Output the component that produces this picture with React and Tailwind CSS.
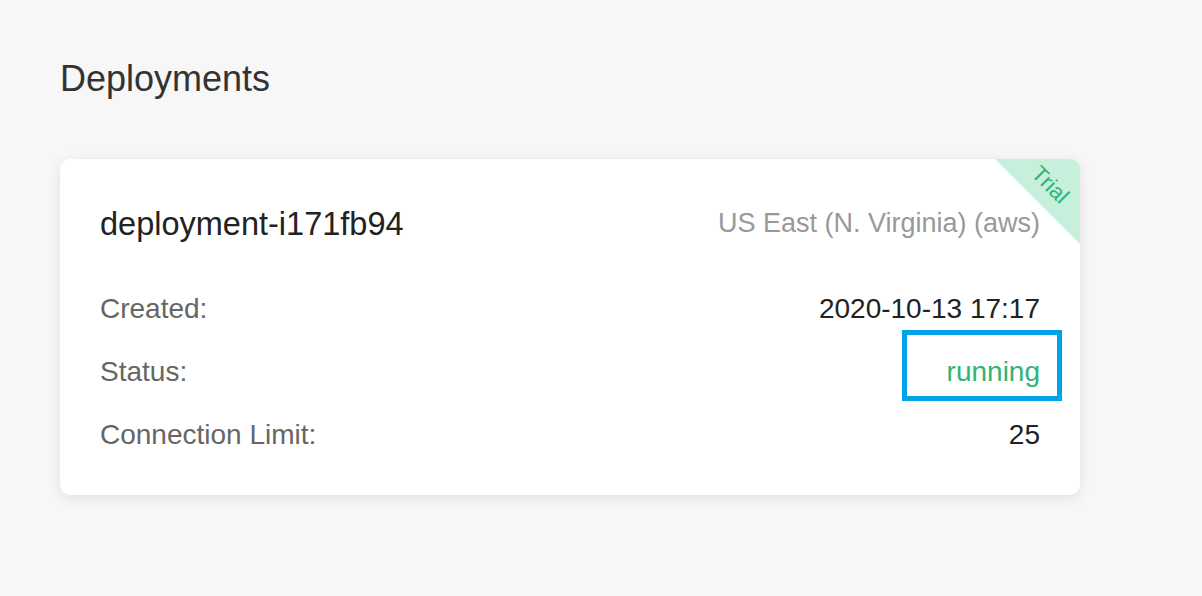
export default function App() {
  const rows = [
    { label: "Created:", value: "2020-10-13 17:17", cls: "text-[#222222]" },
    { label: "Status:", value: "running", cls: "text-[#2fb574]" },
    { label: "Connection Limit:", value: "25", cls: "text-[#222222]" },
  ];
  return (
    <div
      className="min-h-screen w-full bg-[#f7f7f7] px-[60px] pt-[57px]"
      style={{ fontFamily: '"Liberation Sans", Arial, sans-serif' }}
    >
      <h1 className="text-[36px] leading-[44px] text-[#333333] font-normal">Deployments</h1>
      <div className="relative mt-[58px] w-[1020px] rounded-[10px] bg-white shadow-[0_3px_14px_rgba(0,0,0,0.09)] overflow-hidden px-[40px] pt-[45px] pb-[29px]">
        <div className="absolute right-0 top-0 h-0 w-0 border-l-[85px] border-l-transparent border-t-[85px] border-t-[#c6efdc]"></div>
        <div className="absolute right-[-2px] top-[14px] w-[64px] text-center rotate-45 text-[22px] leading-[24px] text-[#2fb574]">
          Trial
        </div>
        <div className="flex justify-between items-start">
          <div className="text-[32.5px] leading-[40px] text-[#222222]">deployment-i171fb94</div>
          <div className="mt-[5px] text-[27px] leading-[28px] text-[#999999]">US East (N. Virginia) (aws)</div>
        </div>
        <div className="mt-[33px] flex flex-col">
          {rows.map((r) => (
            <div key={r.label} className="flex justify-between items-center h-[63px] text-[28px] leading-[63px]">
              <span className="text-[#666666]">{r.label}</span>
              <span className={r.cls}>{r.value}</span>
            </div>
          ))}
        </div>
        <div className="absolute left-[842px] top-[171px] w-[160px] h-[71px] border-[5px] border-[#00a3e8]"></div>
      </div>
    </div>
  );
}
